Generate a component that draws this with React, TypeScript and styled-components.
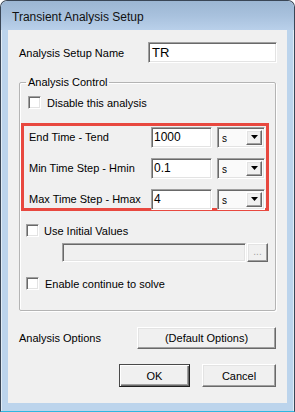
import React from "react";
import styled, { createGlobalStyle, css } from "styled-components";

const GlobalStyle = createGlobalStyle`
  html, body {
    margin: 0;
    padding: 0;
    background: #ffffff;
  }
  body {
    font-family: "Liberation Sans", Arial, sans-serif;
  }
  * {
    box-sizing: border-box;
  }
`;

const sunken = css`
  border: 1px solid;
  border-color: #a0a0a0 #ffffff #ffffff #a0a0a0;
  box-shadow: inset 1px 1px 0 #696969, inset -1px -1px 0 #e3e3e3;
`;

const raised = css`
  border: 1px solid;
  border-color: #ffffff #696969 #696969 #ffffff;
  box-shadow: inset -1px -1px 0 #a0a0a0, inset 1px 1px 0 #e3e3e3;
  background: #f0f0f0;
`;

interface TimeRowDef {
  label: string;
  value: string;
  unit: string;
}

const timeRows: TimeRowDef[] = [
  { label: "End Time - Tend", value: "1000", unit: "s" },
  { label: "Min Time Step - Hmin", value: "0.1", unit: "s" },
  { label: "Max Time Step - Hmax", value: "4", unit: "s" },
];

function DropArrow() {
  return (
    <svg width="7" height="4" viewBox="0 0 7 4">
      <polygon points="0,0 7,0 3.5,4" fill="#000" />
    </svg>
  );
}

export default function App() {
  return (
    <>
      <GlobalStyle />
      <Window>
        <TitleBar>Transient Analysis Setup</TitleBar>
        <Client>
          <NameRow>
            <Label>Analysis Setup Name</Label>
            <NameBox>TR</NameBox>
          </NameRow>

          <Group>
            <Legend>Analysis Control</Legend>

            <CheckRow $indent={8} $gap={6}>
              <CheckBox />
              <span>Disable this analysis</span>
            </CheckRow>

            <Highlight>
              {timeRows.map((row) => (
                <TimeRow key={row.label}>
                  <TimeLabel>{row.label}</TimeLabel>
                  <ValueBox>{row.value}</ValueBox>
                  <Combo>
                    <ComboText>{row.unit}</ComboText>
                    <ComboButton>
                      <DropArrow />
                    </ComboButton>
                  </Combo>
                </TimeRow>
              ))}
            </Highlight>

            <CheckRow $indent={6} $gap={5} $top={13}>
              <CheckBox />
              <span>Use Initial Values</span>
            </CheckRow>

            <FileRow>
              <DisabledBox />
              <BrowseButton>...</BrowseButton>
            </FileRow>

            <CheckRow $indent={6} $gap={6} $top={15}>
              <CheckBox />
              <span>Enable continue to solve</span>
            </CheckRow>
          </Group>

          <OptionsRow>
            <Label>Analysis Options</Label>
            <OptionsButton>(Default Options)</OptionsButton>
          </OptionsRow>

          <ButtonRow>
            <DialogButton $width={71} $default>
              OK
            </DialogButton>
            <DialogButton $width={74}>Cancel</DialogButton>
          </ButtonRow>
        </Client>
      </Window>
    </>
  );
}

// --- Styled Components ---
const Window = styled.div`
  width: 295px;
  height: 412px;
  display: flex;
  flex-direction: column;
  border: 1px solid #3a4656;
  border-bottom-color: #2fb7e0;
  border-radius: 7px 7px 0 0;
  background: #bcd4ec;
  box-shadow: inset 1px 1px 0 rgba(255, 255, 255, 0.55),
    inset -1px 0 0 rgba(255, 255, 255, 0.55);
  overflow: hidden;
`;

const TitleBar = styled.div`
  height: 29px;
  flex-shrink: 0;
  display: flex;
  align-items: center;
  padding: 2px 0 0 11px;
  font-size: 12px;
  color: #111;
  background: linear-gradient(#9cb6d3 0%, #a8c1dd 50%, #b9d0ea 100%);
  border-radius: 6px 6px 0 0;
`;

const Client = styled.div`
  flex: 1;
  margin: 0 7px 8px 7px;
  padding: 12px 11px 0 11px;
  display: flex;
  flex-direction: column;
  background: #f0f0f0;
  font-size: 11px;
  color: #000;
`;

const Label = styled.span`
  font-size: 11px;
`;

const NameRow = styled.div`
  height: 21px;
  display: flex;
  align-items: center;
  justify-content: space-between;
`;

const NameBox = styled.div`
  ${sunken};
  width: 129px;
  height: 21px;
  margin-right: -1px;
  background: #fff;
  padding: 2px 0 0 3px;
  font-size: 13px;
`;

const Group = styled.fieldset`
  margin: 13px 0 0 0;
  padding: 7px 0 20px 0;
  min-width: 0;
  border: 1px solid #b4b4b4;
  border-radius: 2px;
  box-shadow: inset 1px 1px 0 #fff, 1px 1px 0 #fff;
`;

const Legend = styled.legend`
  margin-left: 6px;
  padding: 0 2px;
  font-size: 11px;
  line-height: 13px;
`;

const CheckRow = styled.div<{ $indent: number; $gap: number; $top?: number }>`
  display: flex;
  align-items: center;
  height: 13px;
  margin-top: ${(p) => p.$top || 0}px;
  margin-left: ${(p) => p.$indent}px;
  gap: ${(p) => p.$gap}px;
  font-size: 11px;
`;

const CheckBox = styled.span`
  ${sunken};
  width: 13px;
  height: 13px;
  flex-shrink: 0;
  background: #fff;
`;

const Highlight = styled.div`
  margin: 14px 0 0 1px;
  width: 248px;
  height: 88px;
  border: 3px solid #e8483f;
  padding: 1px 1px 0 5px;
  display: flex;
  flex-direction: column;
  gap: 11px;
`;

const TimeRow = styled.div`
  height: 20px;
  display: flex;
  align-items: center;
  flex-shrink: 0;
`;

const TimeLabel = styled.span`
  flex: 1;
  font-size: 11px;
`;

const ValueBox = styled.div`
  ${sunken};
  width: 61px;
  height: 21px;
  margin-right: 5px;
  background: #fff;
  padding: 2px 0 0 2px;
  font-size: 12px;
`;

const Combo = styled.div`
  ${sunken};
  width: 48px;
  height: 21px;
  display: flex;
  align-items: stretch;
  background: #fafafa;
  padding: 2px;
`;

const ComboText = styled.span`
  flex: 1;
  font-size: 10px;
  padding: 3px 0 0 2px;
`;

const ComboButton = styled.span`
  ${raised};
  width: 16px;
  display: flex;
  align-items: center;
  justify-content: center;
`;

const FileRow = styled.div`
  display: flex;
  margin: 6px 0 0 42px;
  height: 19px;
`;

const DisabledBox = styled.div`
  ${sunken};
  width: 184px;
  height: 19px;
  background: #f0f0f0;
`;

const BrowseButton = styled.span`
  ${raised};
  width: 21px;
  height: 19px;
  margin-left: 1px;
  display: flex;
  align-items: center;
  justify-content: center;
  font-size: 10px;
  color: #a0a0a0;
  padding-bottom: 2px;
`;

const OptionsRow = styled.div`
  margin-top: 16px;
  display: flex;
  align-items: center;
  justify-content: space-between;
`;

const OptionsButton = styled.span`
  ${raised};
  width: 139px;
  height: 22px;
  display: flex;
  align-items: center;
  justify-content: center;
  font-size: 11px;
`;

const ButtonRow = styled.div`
  margin-top: 15px;
  display: flex;
  justify-content: flex-end;
  gap: 12px;
`;

const DialogButton = styled.span<{ $width: number; $default?: boolean }>`
  ${raised};
  width: ${(p) => p.$width}px;
  height: 23px;
  display: flex;
  align-items: center;
  justify-content: center;
  font-size: 11px;
  ${(p) =>
    p.$default &&
    css`
      border-color: #4a4a4a #1e1e1e #1e1e1e #4a4a4a;
      box-shadow: inset 1px 1px 0 #fff, inset -1px -1px 0 #696969,
        inset -2px -2px 0 #a0a0a0;
    `}
`;
